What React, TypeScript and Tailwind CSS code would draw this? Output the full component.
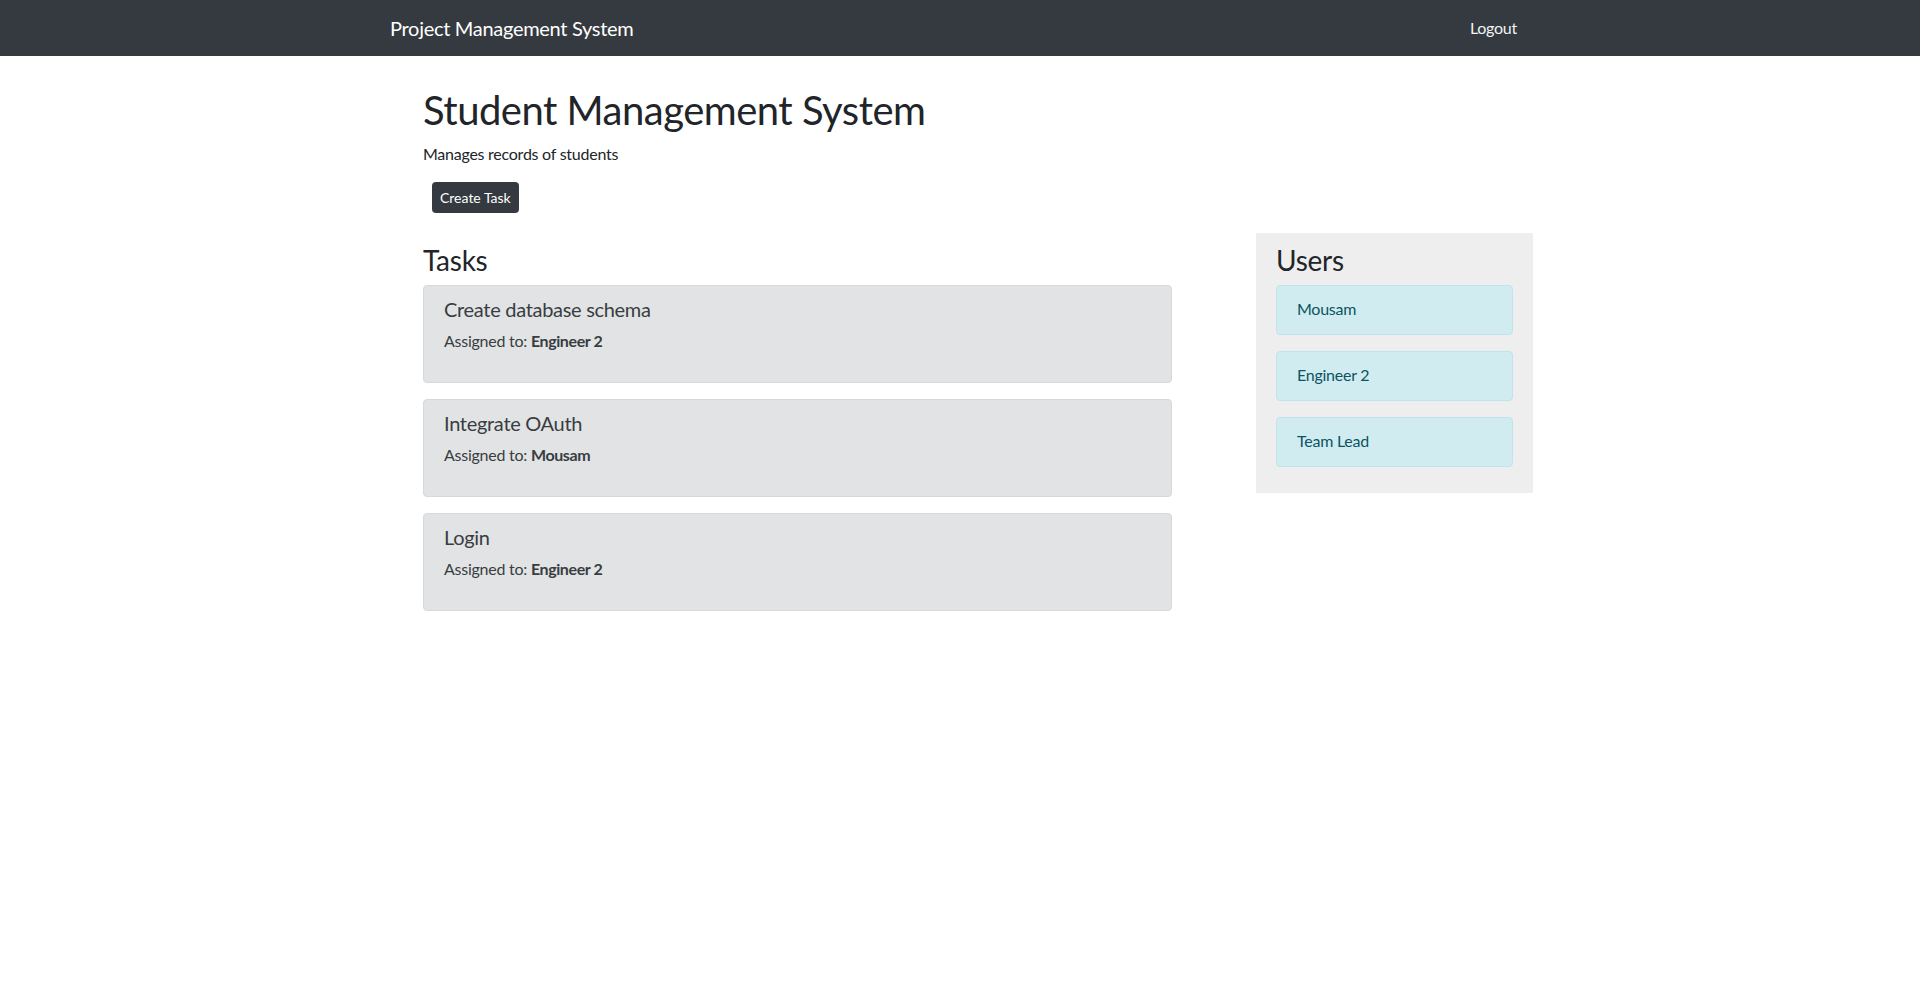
import React from "react";

const tasks = [
  { title: "Create database schema", user: "Engineer 2" },
  { title: "Integrate OAuth", user: "Mousam" },
  { title: "Login", user: "Engineer 2" },
];

const users = ["Mousam", "Engineer 2", "Team Lead"];

export default function App() {
  return (
    <div className="min-h-screen bg-white font-['Lato',sans-serif] text-[#212529] tracking-[-0.25px]">
      <nav className="h-[56px] bg-[#343a40]">
        <div className="mx-auto flex h-full w-[1140px] items-center justify-between">
          <span className="text-[20px] leading-[30px] text-white tracking-[-0.3px]">Project Management System</span>
          <span className="mr-[13px] text-[16px] leading-6 text-[#f1f2f3]">Logout</span>
        </div>
      </nav>
      <main className="mx-auto w-[1140px] pl-[33px] pt-[30px]">
        <h1 className="mb-2 text-[40px] leading-[48px] tracking-[-0.5px]">Student Management System</h1>
        <p className="mb-4 text-[16px] leading-6">Manages records of students</p>
        <button className="ml-[9px] block h-[31px] rounded-[4px] bg-[#343a40] px-2 text-[14px] leading-[21px] tracking-normal text-white">
          Create Task
        </button>
        <div className="mt-[20px] flex items-start">
          <div className="w-[749px] shrink-0 pt-[10px]">
            <h3 className="mb-2 text-[28px] leading-[34px]">Tasks</h3>
            {tasks.map((t) => (
              <div
                key={t.title}
                className="mb-4 rounded-[4px] border border-[#d6d8db] bg-[#e2e3e5] px-5 pb-3 pt-[11px] text-[#383d41]"
              >
                <h5 className="mb-2 text-[20px] leading-6 tracking-[-0.3px]">{t.title}</h5>
                <p className="mb-[17px] text-[16px] leading-6">
                  Assigned to: <strong className="font-bold tracking-[-0.4px]">{t.user}</strong>
                </p>
              </div>
            ))}
          </div>
          <div className="ml-[84px] w-[277px] shrink-0 bg-[#eeeeee] px-5 pb-[10px] pt-[10px]">
            <h3 className="mb-2 text-[28px] leading-[34px]">Users</h3>
            {users.map((u) => (
              <div
                key={u}
                className="mb-4 rounded-[4px] border border-[#bee5eb] bg-[#d1ecf1] px-5 pb-3 pt-[11px] text-[16px] leading-6 text-[#0c5460]"
              >
                <div className="mb-px">{u}</div>
              </div>
            ))}
          </div>
        </div>
      </main>
    </div>
  );
}
